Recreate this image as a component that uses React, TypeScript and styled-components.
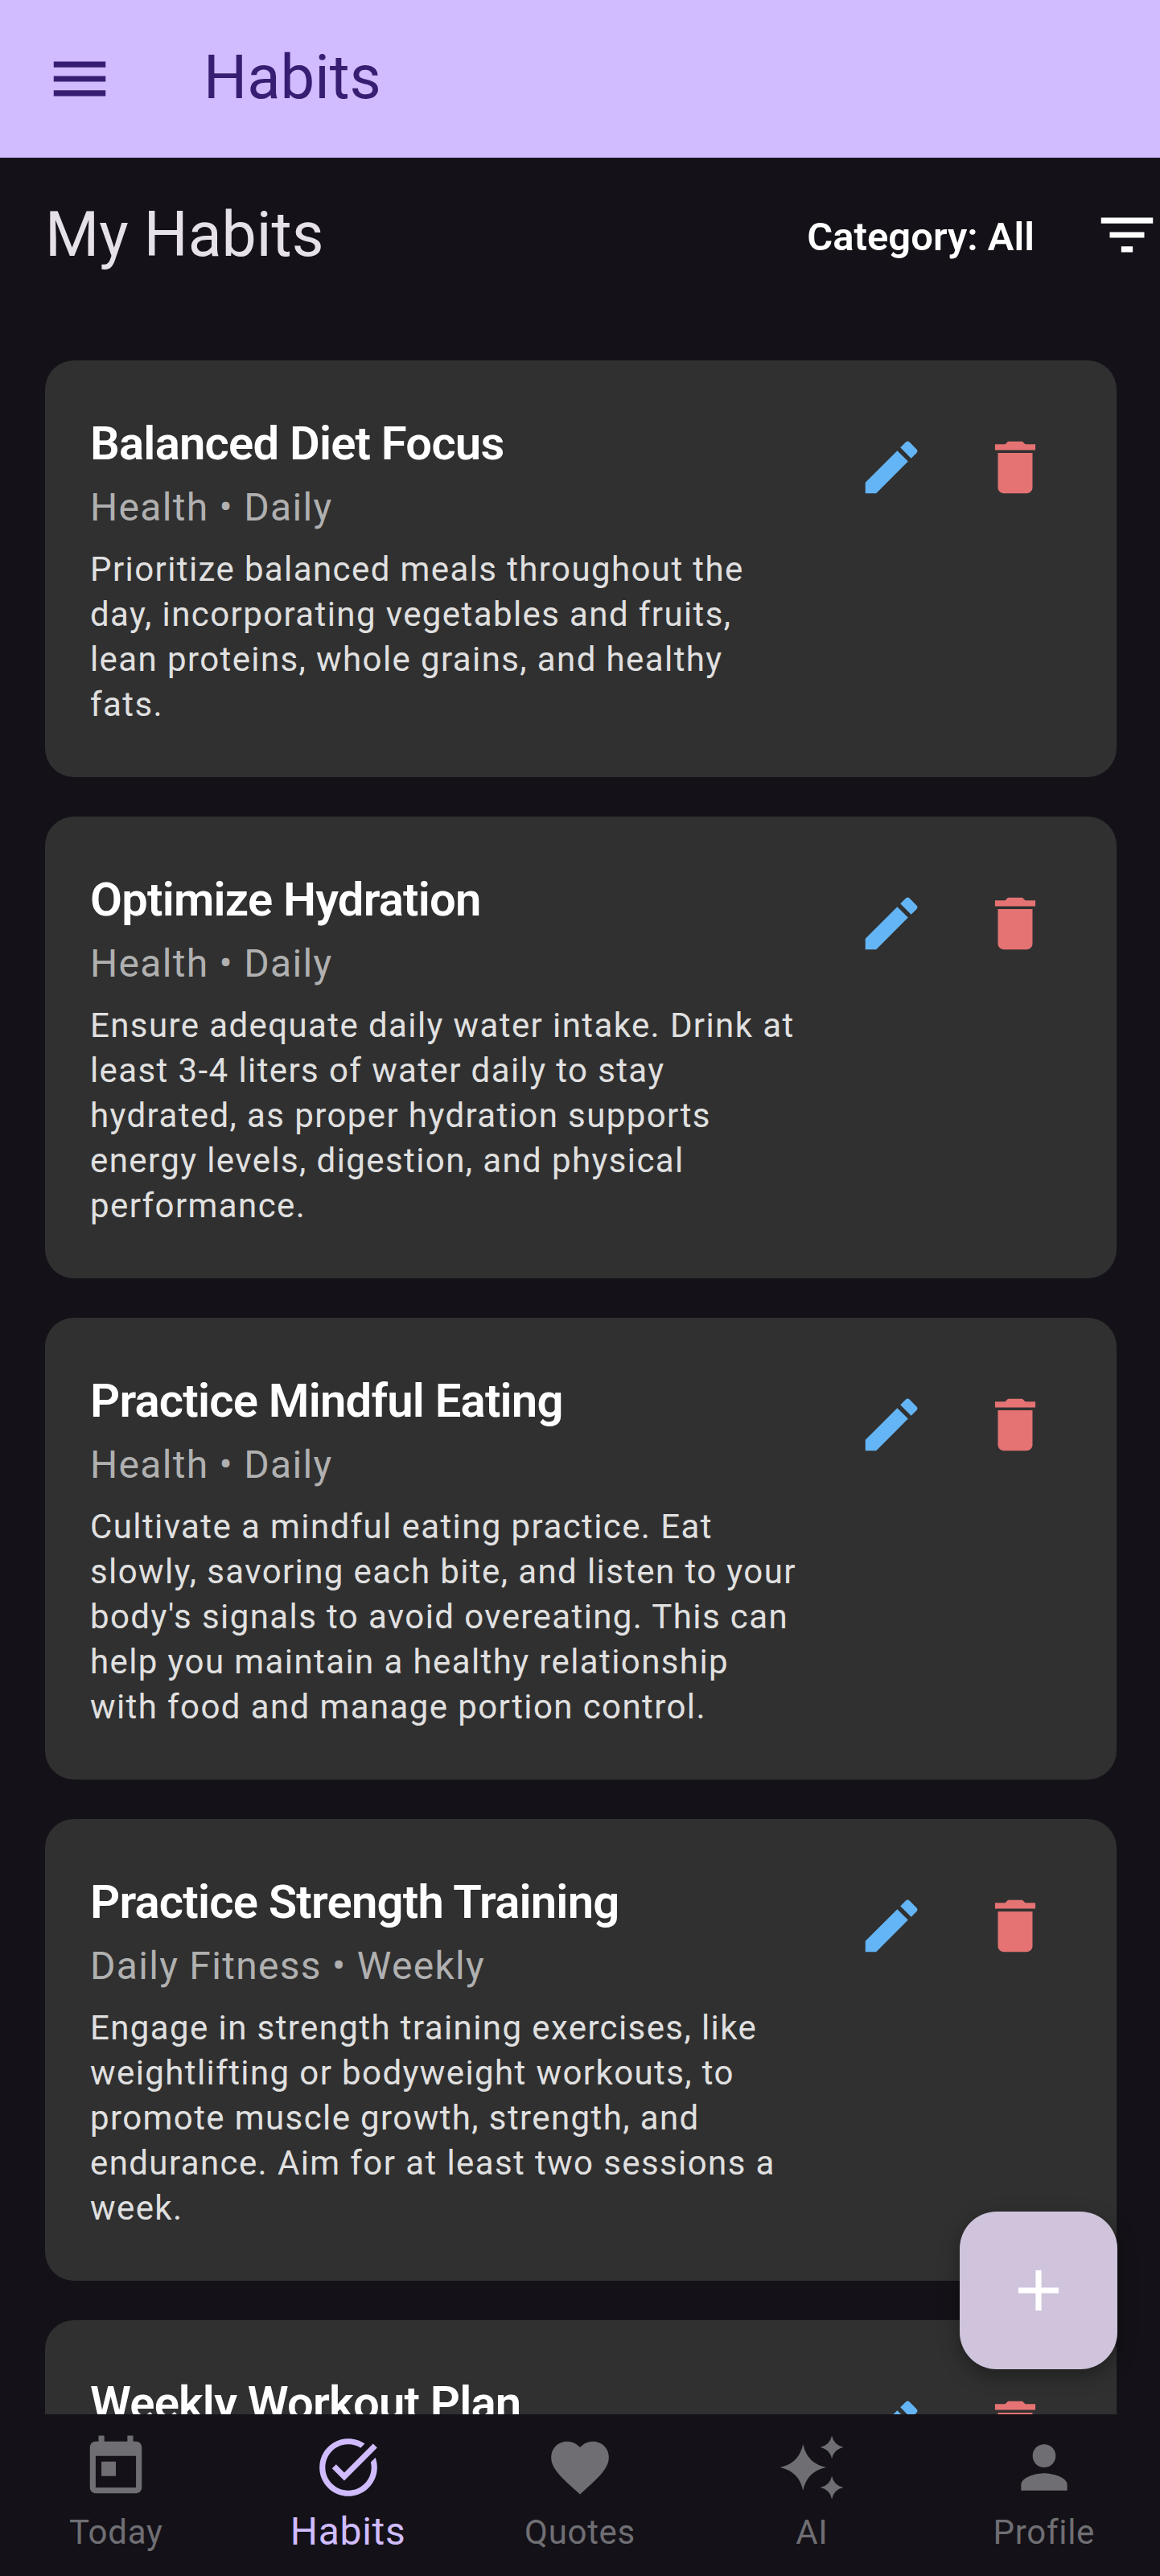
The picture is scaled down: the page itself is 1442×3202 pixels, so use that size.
import React from "react";
import styled, { createGlobalStyle } from "styled-components";

const Global = createGlobalStyle`
  html, body { margin: 0; padding: 0; background: #141218; }
  * { box-sizing: border-box; }
`;

const Screen = styled.div`
  width: 1442px;
  height: 3202px;
  display: flex;
  flex-direction: column;
  position: relative;
  overflow: hidden;
  background: #141218;
  font-family: Roboto, sans-serif;
`;

const AppBar = styled.header`
  height: 196px;
  flex: none;
  display: flex;
  align-items: center;
  background: #d0bcff;
  color: #381e72;
  padding-left: 56px;
`;

const AppBarTitle = styled.h1`
  margin: 0 0 4px 111px;
  font-size: 76px;
  font-weight: 400;
  line-height: 1;
`;

const Main = styled.main`
  flex: 1;
  min-height: 0;
  overflow: hidden;
  display: flex;
  flex-direction: column;
`;

const HeaderRow = styled.div`
  height: 196px;
  flex: none;
  display: flex;
  align-items: center;
  justify-content: space-between;
  padding: 0 0 4px 56px;
`;

const PageTitle = styled.h2`
  margin: 0;
  font-size: 77px;
  font-weight: 400;
  color: #e6e0e9;
  line-height: 1;
`;

const FilterGroup = styled.div`
  display: flex;
  align-items: center;
  gap: 72px;
  margin-right: -2px;
  color: #fff;
`;

const CategoryLabel = styled.span`
  font-size: 49px;
  font-weight: 600;
  line-height: 1;
  margin-top: 4px;
`;

const List = styled.div`
  display: flex;
  flex-direction: column;
  gap: 49px;
  padding: 56px 54px 0 56px;
`;

const Card = styled.article`
  flex: none;
  display: flex;
  justify-content: space-between;
  align-items: flex-start;
  background: #303030;
  border-radius: 36px;
  padding: 65px 83px 62px 56px;
`;

const CardText = styled.div`
  width: 890px;
`;

const CardTitle = styled.h3`
  margin: 0;
  color: #fff;
  font-size: 58px;
  font-weight: 600;
  line-height: 76px;
  letter-spacing: -0.8px;
`;

const CardMeta = styled.div`
  color: #b0b0b0;
  font-size: 48px;
  line-height: 66px;
  letter-spacing: 1.3px;
  margin: 9px 0 16px;
`;

const CardBody = styled.p`
  margin: 0;
  color: #e0e0e0;
  font-size: 42px;
  line-height: 56px;
  letter-spacing: 1.4px;
`;

const Actions = styled.div`
  display: flex;
  gap: 68px;
  margin-top: 25px;
`;

const Fab = styled.button`
  position: absolute;
  left: 1193px;
  top: 2749px;
  width: 196px;
  height: 196px;
  border: 0;
  border-radius: 46px;
  background: #cfc4dc;
  color: #fff;
  display: flex;
  align-items: center;
  justify-content: center;
  padding: 0;
  box-shadow: 0 8px 24px rgba(0, 0, 0, 0.35);
`;

const BottomNav = styled.nav`
  height: 201px;
  flex: none;
  display: grid;
  grid-template-columns: repeat(5, 1fr);
  background: #141218;
`;

const NavItem = styled.div<{ $active?: boolean }>`
  display: flex;
  flex-direction: column;
  align-items: center;
  padding-top: 23px;
  color: ${(p) => (p.$active ? "#d0bcff" : "#6f6e73")};
`;

const NavLabel = styled.span<{ $active?: boolean }>`
  font-size: ${(p) => (p.$active ? 48 : 42)}px;
  line-height: ${(p) => (p.$active ? 48 : 46)}px;
  letter-spacing: 0.7px;
  margin-top: ${(p) => (p.$active ? 13 : 15)}px;
`;

const Svg = styled.svg`
  display: block;
  flex: none;
  fill: currentColor;
`;

const Icon = ({ d, size = 86, color }: { d: string; size?: number; color?: string }) => (
  <Svg viewBox="0 0 24 24" width={size} height={size} style={color ? { color } : undefined}>
    <path d={d} />
  </Svg>
);

const P = {
  menu: "M3 18h18v-2H3v2zm0-5h18v-2H3v2zm0-7v2h18V6H3z",
  filter: "M10 18h4v-2h-4v2zM3 6v2h18V6H3zm3 7h12v-2H6v2z",
  edit: "M3 17.25V21h3.75L17.81 9.94l-3.75-3.75L3 17.25zM20.71 7.04a.996.996 0 000-1.41l-2.34-2.34a.996.996 0 00-1.41 0l-1.83 1.83 3.75 3.75 1.83-1.83z",
  del: "M6 19c0 1.1.9 2 2 2h8c1.1 0 2-.9 2-2V7H6v12zM19 4h-3.5l-1-1h-5l-1 1H5v2h14V4z",
  add: "M19 13h-6v6h-2v-6H5v-2h6V5h2v6h6v2z",
  today: "M19 3h-1V1h-2v2H8V1H6v2H5c-1.11 0-1.99.9-1.99 2L3 19c0 1.1.89 2 2 2h14c1.1 0 2-.9 2-2V5c0-1.1-.9-2-2-2zm0 16H5V8h14v11zM7 10h5v5H7z",
  task: "M22 5.18L10.59 16.6l-4.24-4.24 1.41-1.41 2.83 2.83 10-10L22 5.18zm-2.21 5.04c.13.57.21 1.17.21 1.78 0 4.42-3.58 8-8 8s-8-3.58-8-8 3.58-8 8-8c1.58 0 3.04.46 4.28 1.22l1.44-1.44C16.1 2.67 14.13 2 12 2 6.48 2 2 6.48 2 12s4.48 10 10 10 10-4.48 10-10c0-1.19-.22-2.33-.6-3.39l-1.61 1.61z",
  heart: "M12 21.35l-1.45-1.32C5.4 15.36 2 12.28 2 8.5 2 5.42 4.42 3 7.5 3c1.74 0 3.41.81 4.5 2.09C13.09 3.81 14.76 3 16.5 3 19.58 3 22 5.42 22 8.5c0 3.78-3.4 6.86-8.55 11.54L12 21.35z",
  ai: "M9 4Q10.4 10.6 17 12Q10.4 13.4 9 20Q7.6 13.4 1 12Q7.6 10.6 9 4zM19 1Q19.7 4.3 23 5Q19.7 5.7 19 9Q18.3 5.7 15 5Q18.3 4.3 19 1zM19 15Q19.7 18.3 23 19Q19.7 19.7 19 23Q18.3 19.7 15 19Q18.3 18.3 19 15z",
  person: "M12 12c2.21 0 4-1.79 4-4s-1.79-4-4-4-4 1.79-4 4 1.79 4 4 4zm0 2c-2.67 0-8 1.34-8 4v2h16v-2c0-2.66-5.33-4-8-4z",
};

const habits = [
  { t: "Balanced Diet Focus", m: "Health • Daily", b: ["Prioritize balanced meals throughout the", "day, incorporating vegetables and fruits,", "lean proteins, whole grains, and healthy", "fats."] },
  { t: "Optimize Hydration", m: "Health • Daily", b: ["Ensure adequate daily water intake. Drink at", "least 3-4 liters of water daily to stay", "hydrated, as proper hydration supports", "energy levels, digestion, and physical", "performance."] },
  { t: "Practice Mindful Eating", m: "Health • Daily", b: ["Cultivate a mindful eating practice. Eat", "slowly, savoring each bite, and listen to your", "body's signals to avoid overeating. This can", "help you maintain a healthy relationship", "with food and manage portion control."] },
  { t: "Practice Strength Training", m: "Daily Fitness • Weekly", b: ["Engage in strength training exercises, like", "weightlifting or bodyweight workouts, to", "promote muscle growth, strength, and", "endurance. Aim for at least two sessions a", "week."] },
  { t: "Weekly Workout Plan", m: "", b: [] as string[] },
];

const nav = [
  { l: "Today", d: P.today },
  { l: "Habits", d: P.task, a: true },
  { l: "Quotes", d: P.heart },
  { l: "AI", d: P.ai },
  { l: "Profile", d: P.person },
];

export default function App() {
  return (
    <Screen>
      <Global />
      <AppBar>
        <Icon d={P.menu} />
        <AppBarTitle>Habits</AppBarTitle>
      </AppBar>
      <Main>
        <HeaderRow>
          <PageTitle>My Habits</PageTitle>
          <FilterGroup>
            <CategoryLabel>Category: All</CategoryLabel>
            <Icon d={P.filter} />
          </FilterGroup>
        </HeaderRow>
        <List>
          {habits.map((h) => (
            <Card key={h.t}>
              <CardText>
                <CardTitle>{h.t}</CardTitle>
                {h.m && <CardMeta>{h.m}</CardMeta>}
                {h.b.length > 0 && (
                  <CardBody>
                    {h.b.map((line, i) => (
                      <React.Fragment key={i}>
                        {line}
                        {i < h.b.length - 1 && <br />}
                      </React.Fragment>
                    ))}
                  </CardBody>
                )}
              </CardText>
              <Actions>
                <Icon d={P.edit} color="#64b5f6" />
                <Icon d={P.del} color="#e57373" />
              </Actions>
            </Card>
          ))}
        </List>
      </Main>
      <BottomNav>
        {nav.map((n) => (
          <NavItem key={n.l} $active={n.a}>
            <Icon d={n.d} />
            <NavLabel $active={n.a}>{n.l}</NavLabel>
          </NavItem>
        ))}
      </BottomNav>
      <Fab aria-label="Add">
        <Icon d={P.add} />
      </Fab>
    </Screen>
  );
}
